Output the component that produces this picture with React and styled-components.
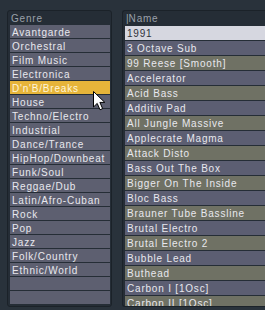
import styled, { createGlobalStyle } from "styled-components";

const GlobalStyle = createGlobalStyle`
	html, body {
		margin: 0;
		padding: 0;
		background-color: #2f3a44;
		background-image: radial-gradient(rgba(0, 0, 0, 0.28) 0.6px, transparent 0.8px);
		background-size: 2px 2px;
		font-family: "Liberation Sans", Arial, sans-serif;
		overflow: hidden;
	}
`;

const genres = [
	"Avantgarde",
	"Orchestral",
	"Film Music",
	"Electronica",
	"D'n'B/Breaks",
	"House",
	"Techno/Electro",
	"Industrial",
	"Dance/Trance",
	"HipHop/Downbeat",
	"Funk/Soul",
	"Reggae/Dub",
	"Latin/Afro-Cuban",
	"Rock",
	"Pop",
	"Jazz",
	"Folk/Country",
	"Ethnic/World",
	"",
	"",
];

const names = [
	"1991",
	"3 Octave Sub",
	"99 Reese [Smooth]",
	"Accelerator",
	"Acid Bass",
	"Additiv Pad",
	"All Jungle Massive",
	"Applecrate Magma",
	"Attack Disto",
	"Bass Out The Box",
	"Bigger On The Inside",
	"Bloc Bass",
	"Brauner Tube Bassline",
	"Brutal Electro",
	"Brutal Electro 2",
	"Bubble Lead",
	"Buthead",
	"Carbon I [1Osc]",
	"Carbon II [1Osc]",
];

const Cursor = () => (
	<CursorSvg width="13" height="20" viewBox="0 0 13 20">
		<path
			d="M0.5 0.5 L0.5 16 L4.2 12.4 L7 18.8 L9.6 17.6 L6.9 11.4 L11.8 11.4 Z"
			fill="#ffffff"
			stroke="#000000"
			strokeWidth="1"
			strokeLinejoin="miter"
		/>
	</CursorSvg>
);

const App = () => {
	return (
		<>
			<GlobalStyle />
			<Browser>
				<Panel $width="105px">
					<Header $height="14px">Genre</Header>
					<List>
						{genres.map((g, i) => (
							<GenreRow key={i} $selected={g === "D'n'B/Breaks"}>
								{g}
							</GenreRow>
						))}
					</List>
					<Cursor />
				</Panel>
				<Panel $width="143px" $open>
					<Header $height="15px">
						<Bar>|</Bar>Name
					</Header>
					<List>
						{names.map((n, i) => (
							<NameRow key={i} $tone={i === 0 ? "hi" : i % 2 === 0 ? "olive" : "blue"}>
								{n}
							</NameRow>
						))}
					</List>
				</Panel>
			</Browser>
		</>
	);
};
export default App;

const Browser = styled.div`
	display: flex;
	gap: 10px;
	height: 310px;
	padding: 10px 0 0 7px;
	box-sizing: border-box;
`;

const Panel = styled.div`
	position: relative;
	width: ${(p) => p.$width};
	flex-shrink: 0;
	height: 297px;
	box-sizing: border-box;
	background: #252d36;
	border: 1px solid #1b2229;
	border-right: ${(p) => (p.$open ? "none" : "1px solid #1b2229")};
	border-radius: ${(p) => (p.$open ? "3px 0 0 3px" : "3px")};
	padding: 0 ${(p) => (p.$open ? "0" : "1px")} 0 2px;
	overflow: hidden;
	display: flex;
	flex-direction: column;
`;

const Header = styled.div`
	height: ${(p) => p.$height};
	line-height: 15px;
	font-size: 10px;
	letter-spacing: 0.8px;
	color: #9ba1aa;
	padding-left: 1px;
	white-space: nowrap;
`;

const Bar = styled.span`
	letter-spacing: 0;
`;

const List = styled.div`
	display: flex;
	flex-direction: column;
	gap: 1px;
`;

const Row = styled.div`
	flex-shrink: 0;
	height: 13px;
	line-height: 15px;
	font-size: 10px;
	letter-spacing: 0.8px;
	padding-left: 2px;
	white-space: nowrap;
	overflow: hidden;
	color: #e8e8ee;
`;

const GenreRow = styled(Row)`
	background: ${(p) => (p.$selected ? "#e6b43a" : "#5d5f70")};
	color: ${(p) => (p.$selected ? "#fff6dc" : "#e8e8ee")};
`;

const NameRow = styled(Row)`
	height: 14px;
	line-height: 16px;
	background: ${(p) =>
		p.$tone === "hi" ? "#d6d7e0" : p.$tone === "olive" ? "#6f7164" : "#5c5e72"};
	color: ${(p) => (p.$tone === "hi" ? "#30323c" : "#e8e8ee")};
`;

const CursorSvg = styled.svg`
	position: absolute;
	left: 85px;
	top: 80px;
`;
